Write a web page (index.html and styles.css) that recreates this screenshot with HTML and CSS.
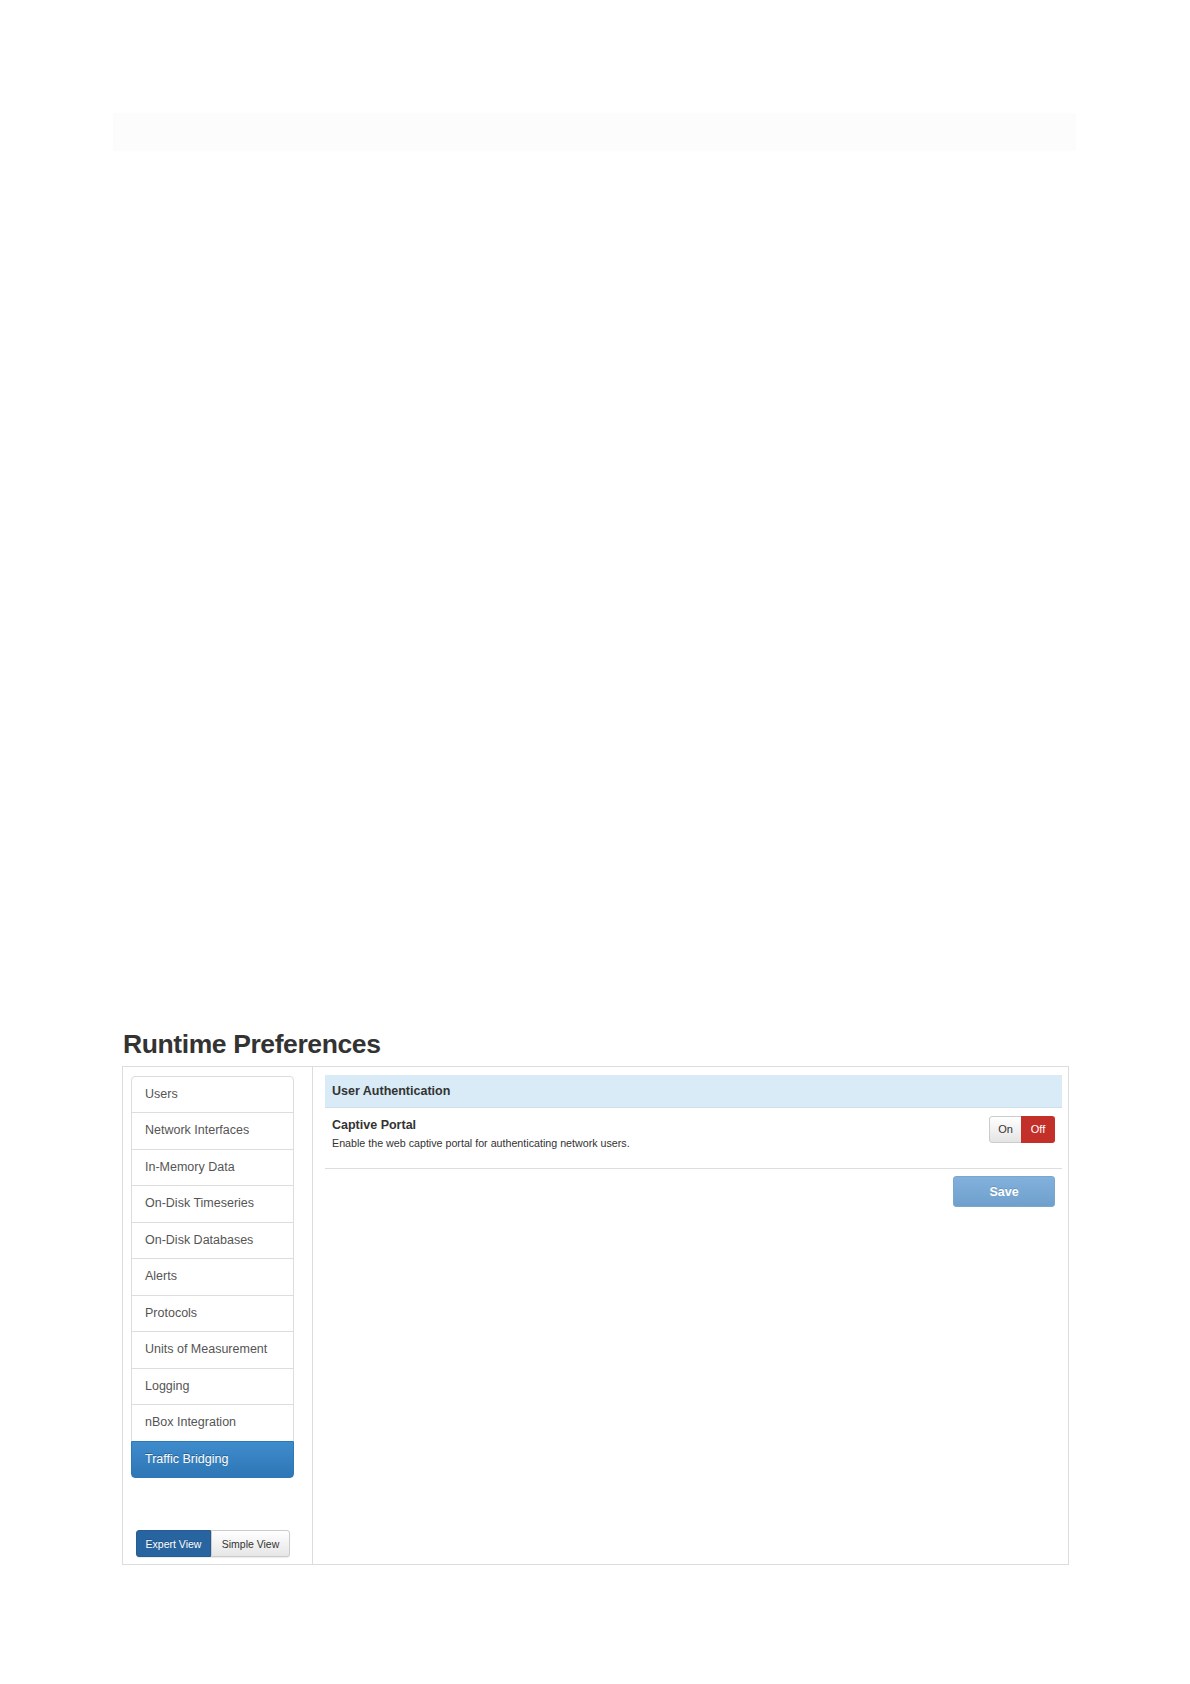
FILE: index.html
```
<!DOCTYPE html>
<html lang="en">
<head>
    <meta charset="UTF-8">
    <meta name="viewport" content="width=device-width, initial-scale=1.0">
    <title>Runtime Preferences</title>
    <link rel="stylesheet" href="styles.css">
</head>
<body>
    <div class="top-bar"></div>

    <div class="prefs">
        <h2 class="prefs-title">Runtime Preferences</h2>

        <div class="prefs-box">
            <div class="prefs-side">
                <div class="side-nav">
                    <a class="side-item">Users</a>
                    <a class="side-item">Network Interfaces</a>
                    <a class="side-item">In-Memory Data</a>
                    <a class="side-item">On-Disk Timeseries</a>
                    <a class="side-item">On-Disk Databases</a>
                    <a class="side-item">Alerts</a>
                    <a class="side-item">Protocols</a>
                    <a class="side-item">Units of Measurement</a>
                    <a class="side-item">Logging</a>
                    <a class="side-item">nBox Integration</a>
                    <a class="side-item active">Traffic Bridging</a>
                </div>

                <div class="view-switch">
                    <button class="view-btn selected">Expert View</button>
                    <button class="view-btn">Simple View</button>
                </div>
            </div>

            <div class="prefs-main">
                <div class="pref-header">User Authentication</div>
                <div class="pref-row">
                    <div class="pref-text">
                        <div class="pref-name">Captive Portal</div>
                        <div class="pref-desc">Enable the web captive portal for authenticating network users.</div>
                    </div>
                    <div class="toggle">
                        <span class="toggle-on">On</span>
                        <span class="toggle-off">Off</span>
                    </div>
                </div>
                <div class="save-row">
                    <button class="save-btn" disabled>Save</button>
                </div>
            </div>
        </div>
    </div>
</body>
</html>
```

FILE: styles.css
```
body {
    margin: 0;
    background-color: #fff;
    font-family: "Liberation Sans", Arial, sans-serif;
    color: #333;
}

.top-bar {
    margin: 113px 0 0 113px;
    width: 963px;
    height: 38px;
    background-color: #fcfcfc;
}

.prefs {
    margin: 877px 0 0 122px;
    width: 947px;
}

.prefs-title {
    margin: 0 0 6px 1px;
    font-size: 26.5px;
    line-height: 32px;
    font-weight: bold;
    color: #333;
    letter-spacing: -0.4px;
}

.prefs-box {
    display: flex;
    border: 1px solid #ddd;
    height: 497px;
}

.prefs-side {
    width: 163px;
    padding: 9px 18px 7px 8px;
    border-right: 1px solid #ddd;
    display: flex;
    flex-direction: column;
}

.side-nav {
    display: flex;
    flex-direction: column;
}

.side-item {
    display: block;
    padding: 9px 13px;
    font-size: 12.5px;
    line-height: 17.45px;
    color: #555;
    border: 1px solid #ddd;
    margin-bottom: -1px;
    background-color: #fff;
}

.side-item:first-child {
    border-top-left-radius: 4px;
    border-top-right-radius: 4px;
}

.side-item.active {
    color: #fff;
    border-color: #2f78b5;
    background-image: linear-gradient(to bottom, #3f8ccc 0%, #2e76b6 100%);
    text-shadow: 0 -1px 0 #286090;
    border-bottom-left-radius: 4px;
    border-bottom-right-radius: 4px;
    margin-bottom: 0;
}

.view-switch {
    display: flex;
    margin: auto 0 0 5px;
}

.view-btn {
    width: 79px;
    height: 27px;
    padding: 0;
    font-family: inherit;
    font-size: 10.5px;
    color: #333;
    border: 1px solid #ccc;
    background-image: linear-gradient(to bottom, #fff 0%, #e6e6e6 100%);
    border-radius: 0 3px 3px 0;
    box-shadow: 0 1px 1px rgba(0, 0, 0, 0.08);
}

.view-btn.selected {
    width: 75px;
    color: #fff;
    border-color: #245d92;
    background-image: none;
    background-color: #2865a0;
    border-radius: 3px 0 0 3px;
    text-shadow: 0 -1px 0 rgba(0, 0, 0, 0.2);
}

.prefs-main {
    flex: 1;
    padding: 8px 6px 0 12px;
}

.pref-header {
    height: 32px;
    line-height: 32px;
    padding-left: 7px;
    font-size: 12.5px;
    font-weight: bold;
    background-color: #d9ebf6;
    border-bottom: 1px solid #cfdfe9;
}

.pref-row {
    display: flex;
    justify-content: space-between;
    align-items: flex-start;
    padding: 8px 7px 18px 7px;
    border-bottom: 1px solid #ddd;
}

.pref-name {
    margin-top: 1px;
    font-size: 12.5px;
    line-height: 16px;
    font-weight: bold;
}

.pref-desc {
    margin-top: 3px;
    font-size: 10.7px;
    line-height: 14px;
}

.toggle {
    display: flex;
    height: 27px;
    border-radius: 3px;
    overflow: hidden;
    font-size: 11px;
}

.toggle-on {
    width: 31px;
    line-height: 25px;
    text-align: center;
    border: 1px solid #ccc;
    border-right: none;
    border-radius: 3px 0 0 3px;
    background-image: linear-gradient(to bottom, #fff 0%, #e4e4e4 100%);
}

.toggle-off {
    width: 34px;
    line-height: 27px;
    text-align: center;
    color: #fff;
    background-color: #c3302a;
}

.save-row {
    display: flex;
    justify-content: flex-end;
    padding: 7px 7px 0 0;
}

.save-btn {
    width: 102px;
    height: 31px;
    font-family: inherit;
    font-size: 12.5px;
    font-weight: bold;
    color: #fff;
    border: 1px solid #7aa6cf;
    border-radius: 3px;
    background-image: linear-gradient(to bottom, #82b1dc 0%, #6f9fcc 100%);
    text-shadow: 0 -1px 0 rgba(0, 0, 0, 0.15);
}
```
